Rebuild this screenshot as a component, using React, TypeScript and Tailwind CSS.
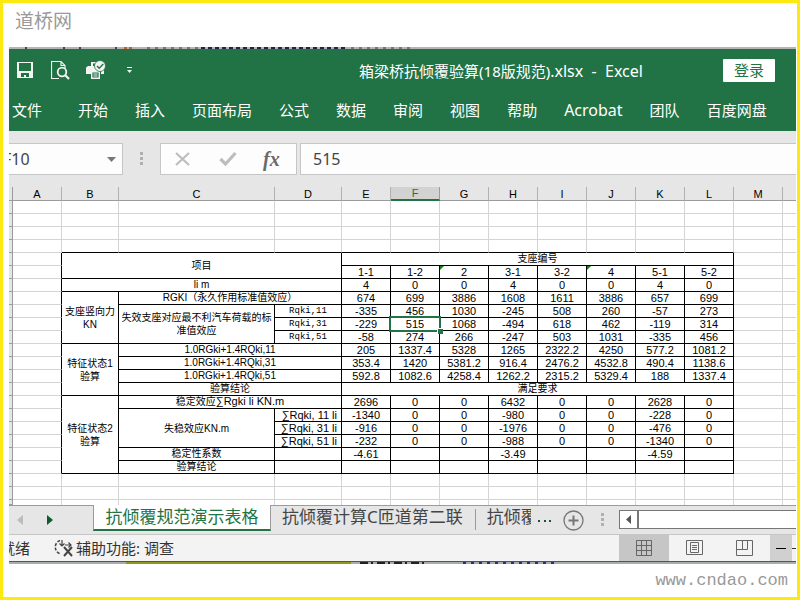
import type { ReactNode } from "react";
import clsx from "clsx";

const menus = ["文件", "开始", "插入", "页面布局", "公式", "数据", "审阅", "视图", "帮助", "Acrobat", "团队", "百度网盘"];

const columns = ["A", "B", "C", "D", "E", "F", "G", "H", "I", "J", "K", "L", "M", ""];

type Label = { text: ReactNode; rows?: number; cols?: number; kind?: "mono" | "right" };
type Row = { labels: Label[]; values?: string[]; merged?: string };

// sheet rows 5 - 21
const rows: Row[] = [
  { labels: [{ text: "项目", rows: 2, cols: 3 }], merged: "支座编号" },
  { labels: [], values: ["1-1", "1-2", "2", "3-1", "3-2", "4", "5-1", "5-2"] },
  { labels: [{ text: "li m", cols: 3 }], values: ["4", "0", "0", "4", "0", "0", "4", "0"] },
  {
    labels: [
      { text: <>支座竖向力<br />KN</>, rows: 4 },
      { text: "RGKI（永久作用标准值效应）", cols: 2 },
    ],
    values: ["674", "699", "3886", "1608", "1611", "3886", "657", "699"],
  },
  {
    labels: [
      { text: "失效支座对应最不利汽车荷载的标准值效应", rows: 3 },
      { text: "Rqki,11", kind: "mono" },
    ],
    values: ["-335", "456", "1030", "-245", "508", "260", "-57", "273"],
  },
  { labels: [{ text: "Rqki,31", kind: "mono" }], values: ["-229", "515", "1068", "-494", "618", "462", "-119", "314"] },
  { labels: [{ text: "Rqki,51", kind: "mono" }], values: ["-58", "274", "266", "-247", "503", "1031", "-335", "456"] },
  {
    labels: [
      { text: <>特征状态1<br />验算</>, rows: 4 },
      { text: "1.0RGki+1.4RQki,11", cols: 2 },
    ],
    values: ["205", "1337.4", "5328", "1265", "2322.2", "4250", "577.2", "1081.2"],
  },
  {
    labels: [{ text: "1.0RGki+1.4RQki,31", cols: 2 }],
    values: ["353.4", "1420", "5381.2", "916.4", "2476.2", "4532.8", "490.4", "1138.6"],
  },
  {
    labels: [{ text: "1.0RGki+1.4RQki,51", cols: 2 }],
    values: ["592.8", "1082.6", "4258.4", "1262.2", "2315.2", "5329.4", "188", "1337.4"],
  },
  { labels: [{ text: "验算结论", cols: 2 }], merged: "满足要求" },
  {
    labels: [
      { text: <>特征状态2<br />验算</>, rows: 6 },
      { text: <>稳定效应<span className="text-[11px] leading-2">∑Rgki li KN.m</span></>, cols: 2 },
    ],
    values: ["2696", "0", "0", "6432", "0", "0", "2628", "0"],
  },
  {
    labels: [
      { text: "失稳效应KN.m", rows: 3 },
      { text: "∑Rqki, 11 li", kind: "right" },
    ],
    values: ["-1340", "0", "0", "-980", "0", "0", "-228", "0"],
  },
  { labels: [{ text: "∑Rqki, 31 li", kind: "right" }], values: ["-916", "0", "0", "-1976", "0", "0", "-476", "0"] },
  { labels: [{ text: "∑Rqki, 51 li", kind: "right" }], values: ["-232", "0", "0", "-988", "0", "0", "-1340", "0"] },
  { labels: [{ text: "稳定性系数" }, { text: "" }], values: ["-4.61", "", "", "-3.49", "", "", "-4.59", ""] },
  { labels: [{ text: "验算结论" }, { text: "" }], values: ["", "", "", "", "", "", "", ""] },
];

const gridLine = "border-r border-b border-[#d4d4d4]";
const boxLine = "border-r border-b border-black";

const RowHead = () => <th className="border-r border-b border-[#9b9b9b] bg-[#e6e6e6]" />;

const BlankRow = ({ last, aboveBox }: { last?: boolean; aboveBox?: boolean }) => (
  <tr className={last ? "h-[5px]" : "h-[13px]"}>
    <RowHead />
    {columns.map((c, i) => (
      <td
        key={i}
        className={clsx(gridLine, aboveBox && i > 0 && i < 12 && "border-b-black", last && "border-b-0", c === "" && "border-r-0")}
      />
    ))}
  </tr>
);

const QuickAccess = () => (
  <div className="flex shrink-0 items-center text-[#f3f3f3]">
    <button aria-label="保存" className="ml-2">
      <svg width="16" height="16" viewBox="0 0 16 16">
        <path d="M0 0h16v16H0z" fill="currentColor" />
        <path d="M2 1h12v8H2zM4 11h8v4H9v-2H7v2H4z" fill="#217346" />
      </svg>
    </button>
    <button aria-label="打印预览" className="ml-[18px]">
      <svg width="19" height="20" viewBox="0 0 19 20" fill="none" stroke="currentColor">
        <path d="M8 18.5H.5V1.5H10l4 4V8M10 1.5v4h4" strokeWidth="1.2" />
        <circle cx="11" cy="12" r="4.3" strokeWidth="1.8" />
        <path d="m14 15 4 4" strokeWidth="2.2" />
      </svg>
    </button>
    <button aria-label="快速打印" className="ml-4">
      <svg width="20" height="20" viewBox="0 0 20 20" fill="currentColor">
        <path d="M0 7.5 2 6h3V2h5v4h8v8h-3v-3H5v3H0z" />
        <path d="M7 3.5h3V6H7z" fill="#217346" />
        <path d="M5.7 11.7h7.6v6.6H5.7z" fill="#217346" stroke="currentColor" strokeWidth="1.4" />
        <path d="M7.5 14h4M7.5 16h4" stroke="currentColor" />
        <circle cx="14" cy="6" r="5.5" stroke="#217346" strokeWidth=".8" />
        <path d="m11 6 2.2 2.3L17.3 4" fill="none" stroke="#217346" strokeWidth="1.4" />
      </svg>
    </button>
    <button aria-label="自定义快速访问工具栏" className="ml-5">
      <svg width="7" height="8" viewBox="0 0 7 8" fill="currentColor">
        <path d="M1 1h5v1H1zM1 4h5L3.5 7z" />
      </svg>
    </button>
  </div>
);

const FormulaBar = () => (
  <div className="flex h-14 items-start bg-[#e6e6e6] pt-3 text-base text-[#444]">
    <div className="flex h-8 w-[114px] shrink-0 items-center border border-l-0 border-[#c6c6c6] bg-[#fdfdfd]">
      <input aria-label="名称框" defaultValue="F10" className="w-24 indent-[-6px] outline-none" />
      <svg className="ml-0.5" width="9" height="5" viewBox="0 0 9 5" fill="#777"><path d="M0 0h9L4.5 5z" /></svg>
    </div>
    <svg className="ml-[17px] mt-[9px] shrink-0" width="3" height="14" fill="#b0b0b0">
      <path d="M0 0h3v3H0zM0 5h3v3H0zM0 10h3v3H0z" />
    </svg>
    <div className="ml-[17px] flex h-8 w-[137px] shrink-0 items-center border border-[#c6c6c6] bg-[#fdfdfd] pl-3.5">
      <button aria-label="取消">
        <svg width="16" height="16" viewBox="0 0 16 16" fill="none" stroke="#bdbdbd" strokeWidth="2.2"><path d="m1 2 13 12M14 2 1 14" /></svg>
      </button>
      <button aria-label="输入" className="ml-7">
        <svg width="18" height="16" viewBox="0 0 18 16" fill="none" stroke="#bdbdbd" strokeWidth="3.2"><path d="m1.5 8 5 5L16.5 2" /></svg>
      </button>
      <button aria-label="插入函数" className="ml-[26px] font-['Liberation_Serif',serif] text-xl font-bold leading-6 italic text-[#6a6a6a]">
        fx
      </button>
    </div>
    <input
      aria-label="编辑栏"
      defaultValue="515"
      className="ml-[3px] h-8 min-w-0 flex-1 border border-r-0 border-[#c6c6c6] bg-[#fdfdfd] pl-3 outline-none"
    />
  </div>
);

const Sheet = () => (
  <table className="w-full table-fixed border-separate border-spacing-0 bg-white text-center font-['Liberation_Sans','Noto_Sans_CJK_SC',sans-serif] text-[10px] leading-3 text-black [&_td]:p-0">
    <colgroup>
      <col className="w-1" />
      <col className="w-[49px]" />
      <col className="w-[57px]" />
      <col className="w-[156px]" />
      <col className="w-[67px]" />
      {columns.slice(4, 13).map((c) => (
        <col key={c} className="w-[49px]" />
      ))}
      <col />
    </colgroup>
    <thead>
      <tr className="h-[14px] bg-[#e6e6e6] text-[11px]">
        <th className="border-r border-b border-[#9b9b9b]" />
        {columns.map((c) => (
          <th
            key={c}
            className={clsx(
              "p-0 font-normal",
              c === "F"
                ? "border-r border-b-2 border-r-[#9b9b9b] border-b-[#217346] bg-[#d2d2d2] text-[#217346]"
                : "border-r border-b border-r-[#b1b1b1] border-b-[#9b9b9b]",
              c === "" && "border-r-0",
            )}
          >
            {c}
          </th>
        ))}
      </tr>
    </thead>
    <tbody>
      <BlankRow />
      <BlankRow />
      <BlankRow />
      <BlankRow aboveBox />
      {rows.map((row, r) => (
        <tr key={r} className="h-[13px]">
          <RowHead />
          <td className={clsx(gridLine, "border-r-black")} />
          {row.labels.map((l, i) => (
            <td
              key={i}
              rowSpan={l.rows}
              colSpan={l.cols}
              className={clsx(
                boxLine,
                l.rows && "leading-[13px]",
                l.kind === "mono" && "font-['Liberation_Mono',monospace] text-[9px]",
                l.kind === "right" && "text-right text-[11px] pr-1!",
              )}
            >
              {l.text}
            </td>
          ))}
          {row.merged && <td colSpan={8} className={boxLine}>{row.merged}</td>}
          {row.values?.map((v, i) => (
            <td key={i} className={clsx(boxLine, "relative text-[11px]")}>
              {v}
              {r === 1 && (i === 2 || i === 5) && (
                <span className="absolute top-0 left-0 size-1 bg-[#108010] [clip-path:polygon(0_0,100%_0,0_100%)]" />
              )}
              {r === 5 && i === 1 && (
                <span className="absolute -inset-x-0.5 -inset-y-0.5 z-10 border-2 border-[#217346]">
                  <span className="absolute -right-1 -bottom-1 size-1.5 border-t border-l border-white bg-[#217346]" />
                </span>
              )}
            </td>
          ))}
          <td className={gridLine} />
          <td className="border-b border-[#d4d4d4]" />
        </tr>
      ))}
      <BlankRow />
      <BlankRow />
      <BlankRow last />
    </tbody>
  </table>
);

const SheetTabs = () => (
  <div className="flex h-[29px] overflow-hidden bg-[#e6e6e6] text-[17px] leading-[22px] whitespace-nowrap text-[#444]">
    <div className="flex w-[84px] shrink-0 items-center gap-6 border-t border-[#9b9b9b] pl-2">
      <button aria-label="上一个工作表"><svg width="6" height="10" fill="#bcbcbc"><path d="M6 0v10L0 5z" /></svg></button>
      <button aria-label="下一个工作表"><svg width="6" height="10" fill="#0e5c2f"><path d="M0 0v10l6-5z" /></svg></button>
    </div>
    <button className="h-[26px] w-[178px] shrink-0 border-x border-b-2 border-x-[#9b9b9b] border-b-[#217346] bg-white text-[#217346]">
      抗倾覆规范演示表格
    </button>
    <div className="flex min-w-0 flex-1 items-start border-t border-[#9b9b9b]">
      <button className="ml-[11px] shrink-0">抗倾覆计算C匝道第二联</button>
      <span className="mt-[3px] ml-3 h-[21px] w-px shrink-0 bg-[#9b9b9b]" />
      <button className="ml-[11px] w-11 shrink-0 overflow-hidden text-left">抗倾覆</button>
      <svg className="mt-[14px] ml-[7px] shrink-0" width="14" height="2" fill="#0e5c2f">
        <path d="M0 0h2v2H0zM6 0h2v2H6zM11 0h2v2h-2z" />
      </svg>
      <button aria-label="新工作表" className="mt-1 ml-[11px] shrink-0">
        <svg width="21" height="21" viewBox="0 0 21 21" fill="none" stroke="#777">
          <circle cx="10.5" cy="10.5" r="9.5" strokeWidth="1.3" />
          <path d="M10.5 5.5v10M5.5 10.5h10" strokeWidth="2" />
        </svg>
      </button>
      <svg className="mt-[7px] ml-[17px] shrink-0" width="3" height="14" fill="#b0b0b0">
        <path d="M0 0h3v3H0zM0 5h3v3H0zM0 10h3v3H0z" />
      </svg>
      <div className="mt-1 ml-[15px] flex h-[19px] flex-1 border border-r-0 border-[#777] bg-white">
        <button aria-label="向左滚动" className="flex w-[19px] items-center justify-center border-r-2 border-[#777]">
          <svg width="5" height="9" fill="#555"><path d="M5 0v9L0 4.5z" /></svg>
        </button>
      </div>
    </div>
  </div>
);

const StatusBar = () => (
  <div className="flex h-[28px] items-center overflow-hidden border-t border-b border-t-[#c6c6c6] border-b-[#217346] bg-[#f3f3f3] text-[15px] whitespace-nowrap text-[#333]">
    <span className="-ml-[9px]">就绪</span>
    <svg className="ml-6 shrink-0" width="20" height="18" viewBox="0 0 20 18" fill="none" stroke="#444">
      <path d="M6 1.5A7 7 0 0 0 7 15" strokeWidth="1.5" strokeDasharray="3 1.5" />
      <path d="M8 1v6M5.5 4.5 8 7l2.5-2.5M11 6h6M14.5 3.5 17 6l-2.5 2.5" strokeWidth="1.2" />
      <path d="m10 8 8 9M18 8l-8 9" strokeWidth="2" />
    </svg>
    <span className="ml-0.5">辅助功能: 调查</span>
    <div className="ml-auto flex h-full shrink-0 text-[#666]">
      <button aria-label="普通" className="flex w-[50px] items-center justify-center bg-[#c6c6c6]">
        <svg width="16" height="16" fill="none" stroke="currentColor"><path d="M.5.5h15v15H.5zM5.5 0v16M10.5 0v16M0 5.5h16M0 10.5h16" /></svg>
      </button>
      <button aria-label="页面布局" className="flex w-[50px] items-center justify-center">
        <svg width="17" height="16" fill="none" stroke="currentColor"><path d="M.5.5h16v14H.5zM4.5 2.5h8v10h-8zM6 5.5h5M6 7.5h5M6 9.5h5" /></svg>
      </button>
      <button aria-label="分页预览" className="flex w-[50px] items-center justify-center">
        <svg width="17" height="16" fill="none" stroke="currentColor"><path d="M.5.5h16v15H.5zM.5 9.5h11V.5M6.5 0v9" /></svg>
      </button>
      <button aria-label="缩小" className="ml-px flex w-[22px] items-center justify-center bg-[#d0d0d0]">
        <span className="h-px w-2.5 bg-black" />
      </button>
      <span className="h-px w-1 self-center bg-[#333]" />
    </div>
  </div>
);

const App = () => (
  <div className="flex min-h-screen flex-col overflow-hidden border-3 border-[#fde910] bg-white pr-px pl-1.5 font-['Noto_Sans','Noto_Sans_CJK_SC',sans-serif]">
    <header className="h-11 pt-1 pl-1.5 text-[19px] leading-7 text-[#999]">道桥网</header>

    {/* sliver of the window behind */}
    <svg className="block h-0.5 w-full bg-[#b5b5b5]" fill="none" strokeWidth="2">
      <path d="M16 1h2M54 1h2M70 1h2M106 1h2" stroke="#444" />
      <path d="M115 1h10" stroke="#c06030" strokeDasharray="3 2" />
      <path d="M138 1h52M342 1h63" stroke="#777" strokeDasharray="3 5" />
      <path d="M192 1h145" stroke="#222244" strokeDasharray="4 3" />
    </svg>

    <main>
      <div className="h-[82px] overflow-hidden bg-[#217346] text-[15px] whitespace-nowrap text-white">
        <div className="flex h-[42px] items-center">
          <QuickAccess />
          <h1 className="min-w-0 flex-1 pt-0.5 pl-[146px] text-center">
            箱梁桥抗倾覆验算(18版规范)<span className="text-base">.xlsx&nbsp; -&nbsp; Excel</span>
          </h1>
          <button className="mr-[21px] h-[23px] w-[52px] shrink-0 rounded-[1px] bg-white leading-[22px] text-[#217346]">登录</button>
        </div>
        <nav className="flex h-[38px] items-center gap-[27px] pl-[3px]">
          {menus.map((m, i) => (
            <button key={m} className={clsx("shrink-0", i === 0 && "mr-[9px]", m === "Acrobat" && "text-base")}>{m}</button>
          ))}
        </nav>
      </div>
      <FormulaBar />
      <Sheet />
      <SheetTabs />
      <StatusBar />
    </main>

    <svg className="block h-0.5 w-full bg-[#a8adad]" fill="none" strokeWidth="2">
      <path d="M117 1h225" stroke="#92961a" />
      <path d="M351 1h66" stroke="#222" strokeDasharray="8 3 2 4" />
      <path d="M454 1h94" stroke="#2b2b88" strokeDasharray="3 5" />
    </svg>
    <footer className="pt-px pr-2 text-right font-['Liberation_Mono',monospace] text-[17px] leading-8 text-[#999]">www.cndao.com</footer>
  </div>
);

export default App;
